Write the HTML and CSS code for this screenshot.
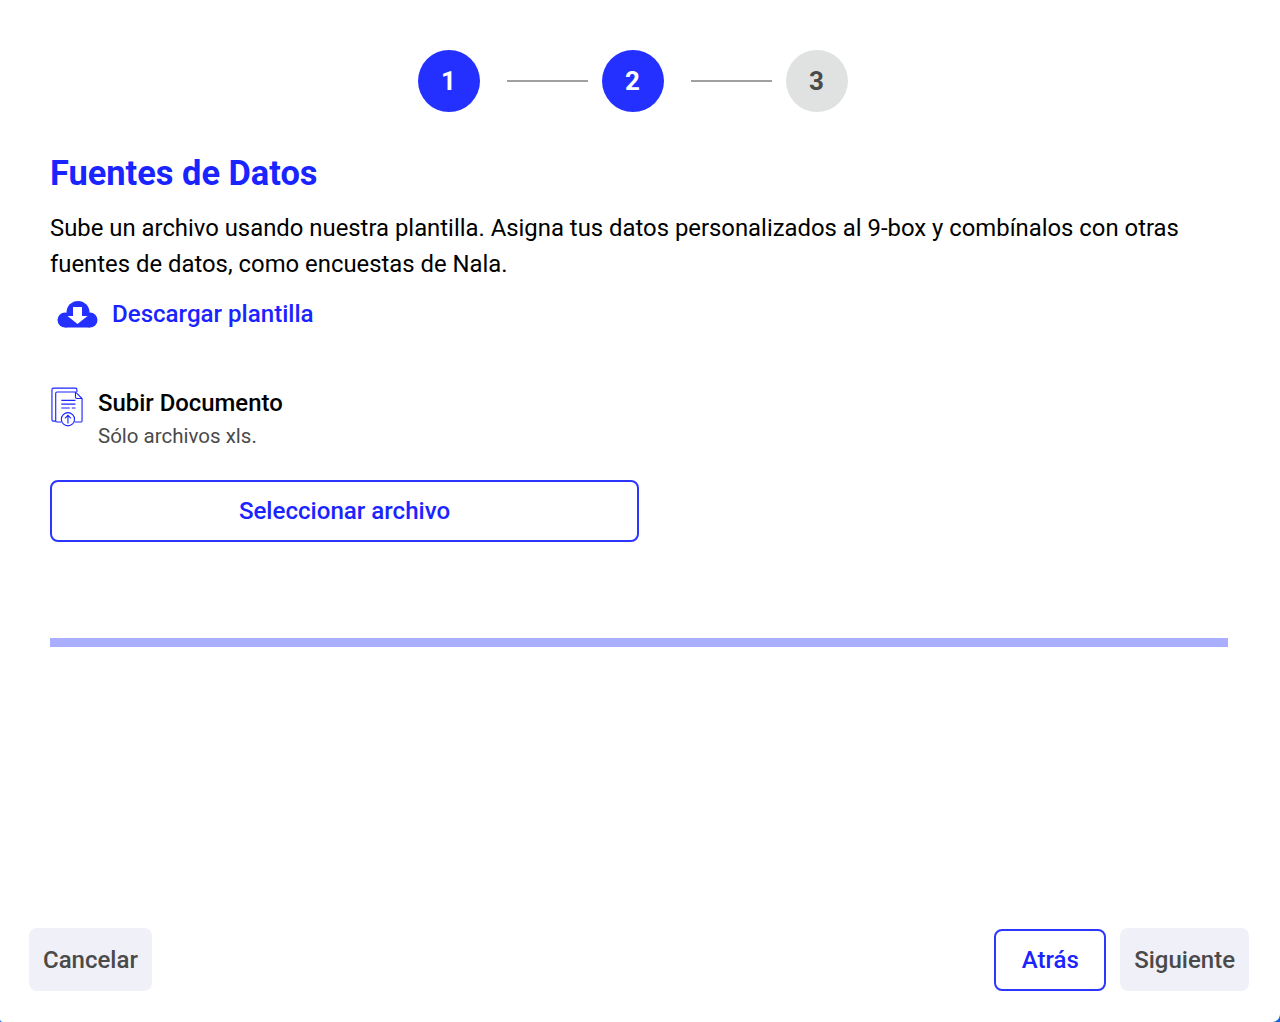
FILE: index.html
```html
<!DOCTYPE html>
<html lang="es">
<head>
    <meta charset="UTF-8">
    <meta name="viewport" content="width=device-width, initial-scale=1.0">
    <title>Fuentes de Datos</title>
    <link rel="stylesheet" href="styles.css">
</head>
<body>
    <div class="modal">
        <div class="pasos">
            <div class="paso activo">1</div>
            <div class="linea"></div>
            <div class="paso activo">2</div>
            <div class="linea"></div>
            <div class="paso">3</div>
        </div>

        <h1 class="titulo">Fuentes de Datos</h1>
        <p class="descripcion">Sube un archivo usando nuestra plantilla. Asigna tus datos personalizados al 9-box y combínalos con otras fuentes de datos, como encuestas de Nala.</p>

        <a class="descarga" href="#">
            <svg class="icono-nube" viewBox="0 0 42 30" width="42" height="30">
                <g fill="#2430ff">
                    <circle cx="9" cy="21" r="7.500"/>
                    <circle cx="22" cy="13.500" r="11.500"/>
                    <circle cx="34" cy="21" r="7.500"/>
                    <rect x="9" y="16" width="25" height="12.500"/>
                </g>
                <path fill="#fff" d="M17 8h9v9h5.500L21.500 25 11.500 17H17z"/>
            </svg>
            <span>Descargar plantilla</span>
        </a>

        <div class="subir">
            <svg class="icono-doc" viewBox="0 0 34 42" width="32" height="40" fill="none" stroke="#1a24ff" stroke-width="1.200">
                <path d="M5 36H2.500A1.500 1.500 0 0 1 1 34.500V2.500A1.500 1.500 0 0 1 2.500 1H26a1.500 1.500 0 0 1 1.500 1.500V5"/>
                <path d="M11 37H6.500A1.500 1.500 0 0 1 5 35.500V6.500A1.500 1.500 0 0 1 6.500 5H26l7 7v23.500a1.500 1.500 0 0 1-1.500 1.500H25"/>
                <path d="M26 5v5.500a1.500 1.500 0 0 0 1.500 1.500H33"/>
                <path d="M11 14h15M11 18h15M11 22h9M22 22h4"/>
                <circle cx="18" cy="34" r="7"/>
                <path d="M18 38.500V30M14.800 33l3.200-3.200 3.200 3.200"/>
            </svg>
            <div>
                <div class="subir-titulo">Subir Documento</div>
                <div class="subir-nota">Sólo archivos xls.</div>
            </div>
        </div>

        <button class="btn-archivo">Seleccionar archivo</button>

        <div class="barra"></div>

        <div class="acciones">
            <button class="btn gris">Cancelar</button>
            <div class="acciones-der">
                <button class="btn borde">Atrás</button>
                <button class="btn gris">Siguiente</button>
            </div>
        </div>
    </div>
</body>
</html>
```

FILE: styles.css
```css
body {
    margin: 0;
    background: #1565d8;
    font-family: Roboto, Arial, sans-serif;
    color: #000;
}
.modal {
    height: 1022px;
    box-sizing: border-box;
    padding: 50px 52px 31px 50px;
    display: flex;
    flex-direction: column;
    background: #fff;
    border-radius: 0 0 8px 3px;
}
.pasos {
    display: flex;
    justify-content: center;
    align-items: center;
    padding-right: 13px;
}
.paso {
    width: 62px;
    height: 62px;
    border-radius: 50%;
    background: #e0e1e1;
    color: #4a4a4a;
    font-size: 26px;
    font-weight: 700;
    display: flex;
    justify-content: center;
    align-items: center;
}
.paso.activo {
    background: #2430ff;
    color: #fff;
}
.linea {
    width: 81px;
    height: 2px;
    background: #a0a0a0;
    margin: 0 14px 0 27px;
}
.titulo {
    margin: 41px 0 0;
    font-size: 34.4px;
    line-height: 40px;
    font-weight: 700;
    color: #1a24ff;
}
.descripcion {
    margin: 17px 0 0;
    font-size: 23.87px;
    line-height: 36px;
}
.descarga {
    display: flex;
    align-items: center;
    gap: 14px;
    margin: 14px 0 0 6px;
    color: #1a24ff;
    font-size: 24.1px;
    font-weight: 500;
    line-height: 36px;
    text-decoration: none;
}
.subir {
    display: flex;
    gap: 15px;
    margin-top: 54px;
}
.icono-doc {
    margin: 1px 0 0 1px;
}
.subir-titulo {
    padding-top: 1px;
    font-size: 23.9px;
    font-weight: 500;
    line-height: 32px;
}
.subir-nota {
    margin-top: 3px;
    font-size: 20.5px;
    line-height: 28px;
    color: #4a4a4a;
}
.btn-archivo {
    width: 589px;
    height: 62px;
    margin-top: 30px;
    background: #fff;
    border: 2px solid #2c36ff;
    border-radius: 8px;
    color: #1a24ff;
    font: 500 24.1px Roboto, Arial, sans-serif;
}
.barra {
    height: 9px;
    margin-top: 96px;
    background: #aaaeff;
}
.acciones {
    margin: auto -21px 0 -21px;
    display: flex;
    justify-content: space-between;
}
.acciones-der {
    display: flex;
    align-items: center;
    gap: 14px;
}
.btn {
    height: 63px;
    padding: 0 14px;
    border: 0;
    border-radius: 8px;
    font: 500 24px Roboto, Arial, sans-serif;
}
.btn.gris {
    background: #f0f0f8;
    color: #4a4a4a;
}
.btn.borde {
    width: 112px;
    height: 62px;
    background: #fff;
    border: 2px solid #2c36ff;
    color: #1a24ff;
}
```
